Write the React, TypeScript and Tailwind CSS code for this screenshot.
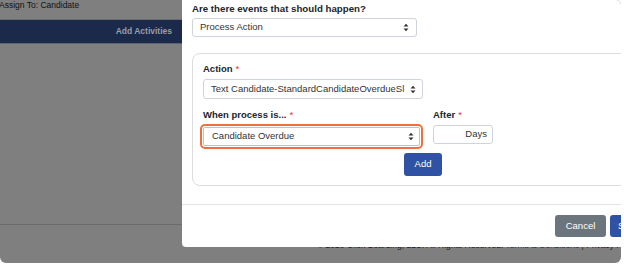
import React from "react";

const Arrows = () => (
  <svg width="6" height="9" viewBox="0 0 6 9" className="shrink-0">
    <path d="M0.5 3.6 L3 0.8 L5.5 3.6 Z" fill="#333" />
    <path d="M0.5 5.4 L3 8.2 L5.5 5.4 Z" fill="#333" />
  </svg>
);

const Req = () => <span className="text-[#dc3545] font-normal ml-[3px]">*</span>;

export default function App() {
  return (
    <div
      className="w-[624px] h-[266px] bg-white overflow-hidden"
      style={{ fontFamily: '"Liberation Sans", Arial, sans-serif' }}
    >
      <div className="relative w-[621px] h-[263px] bg-[#7f7f7f] rounded-b-[6px] rounded-tr-[5px] overflow-hidden flex flex-col">
        {/* page behind */}
        <div className="h-[20px] border-b border-[#6b6b6b] text-[8.5px] leading-[11px] text-[#111] -ml-[1px]">
          Assign To: Candidate
        </div>
        <div className="h-[24px] bg-[#1b2a4b] border-b border-[#5d6373] flex items-center justify-end w-[182px] pr-[10px]">
          <span className="text-[8.5px] font-bold text-[#9a9da5]">Add Activities</span>
        </div>
        <div className="h-[181px] border-b border-[#6b6b6b]"></div>
        <div className="flex-1 pl-[317px] pt-[15px] text-[8.5px] leading-[10px] text-[#1d1d1d] whitespace-nowrap">
          © 2020 Click Boarding, LLC. All Rights Reserved.{" "}
          <span className="text-[#1c2f5e]">Terms &amp; Conditions</span> | Privacy Policy
        </div>

        {/* modal */}
        <div className="absolute left-[182px] top-0 w-[460px] h-[247px] bg-white rounded-bl-[4px] flex flex-col">
          <div className="pl-[10px] pt-[2px] h-[205px] border-b border-[#e3e3e3]">
            <div className="text-[9.7px] leading-[13px] font-bold text-[#212529]">
              Are there events that should happen?
            </div>
            <div className="mt-[3px] w-[225px] h-[19px] border border-[#ced4da] rounded-[3px] flex items-center justify-between pl-[7px] pr-[7px] text-[9.5px] text-[#333]">
              <span>Process Action</span>
              <Arrows />
            </div>
            <div className="mt-[16px] h-[133px] border border-[#dcdcdc] rounded-[8px] pl-[10px] pt-[8px]">
              <div className="text-[9.5px] leading-[13px] font-bold text-[#212529]">
                Action<Req />
              </div>
              <div className="mt-[4px] w-[220px] h-[20px] border border-[#ced4da] rounded-[3px] flex items-center justify-between pl-[7px] pr-[6px] text-[9.5px] text-[#333] whitespace-nowrap overflow-hidden">
                <span>Text Candidate-StandardCandidateOverdueSl</span>
                <Arrows />
              </div>
              <div className="mt-[9px] flex gap-[10px]">
                <div className="flex flex-col">
                  <div className="text-[9.5px] leading-[13px] font-bold text-[#212529]">
                    When process is...<Req />
                  </div>
                  <div className="mt-[3px] -ml-[3px] w-[223px] h-[25px] border-2 border-[#f26d3d] rounded-[5px] p-[1px]">
                    <div className="w-full h-full border border-[#b9c3d0] rounded-[2px] flex items-center justify-between pl-[8px] pr-[5px] text-[9.5px] text-[#333]">
                      <span>Candidate Overdue</span>
                      <Arrows />
                    </div>
                  </div>
                </div>
                <div className="flex flex-col">
                  <div className="text-[9.5px] leading-[13px] font-bold text-[#212529]">
                    After<Req />
                  </div>
                  <div className="mt-[4px] w-[60px] h-[19px] border border-[#ced4da] rounded-[3px] flex items-center justify-end pr-[5px] text-[9.5px] text-[#333]">
                    Days
                  </div>
                </div>
              </div>
              <div className="mt-[4px] ml-[201px] w-[38px] h-[23px] bg-[#2f52a5] rounded-[3px] flex items-center justify-center text-white text-[9.5px]">
                Add
              </div>
            </div>
          </div>
          <div className="flex items-start pt-[10px] pl-[373px] gap-[4px]">
            <div className="shrink-0 w-[51px] h-[22px] bg-[#6c757d] rounded-[3px] flex items-center justify-center text-white text-[9.5px]">
              Cancel
            </div>
            <div className="shrink-0 w-[40px] h-[22px] bg-[#2f52a5] rounded-[3px] flex items-center pl-[8px] text-white text-[9.5px]">
              Save
            </div>
          </div>
        </div>
      </div>
    </div>
  );
}
